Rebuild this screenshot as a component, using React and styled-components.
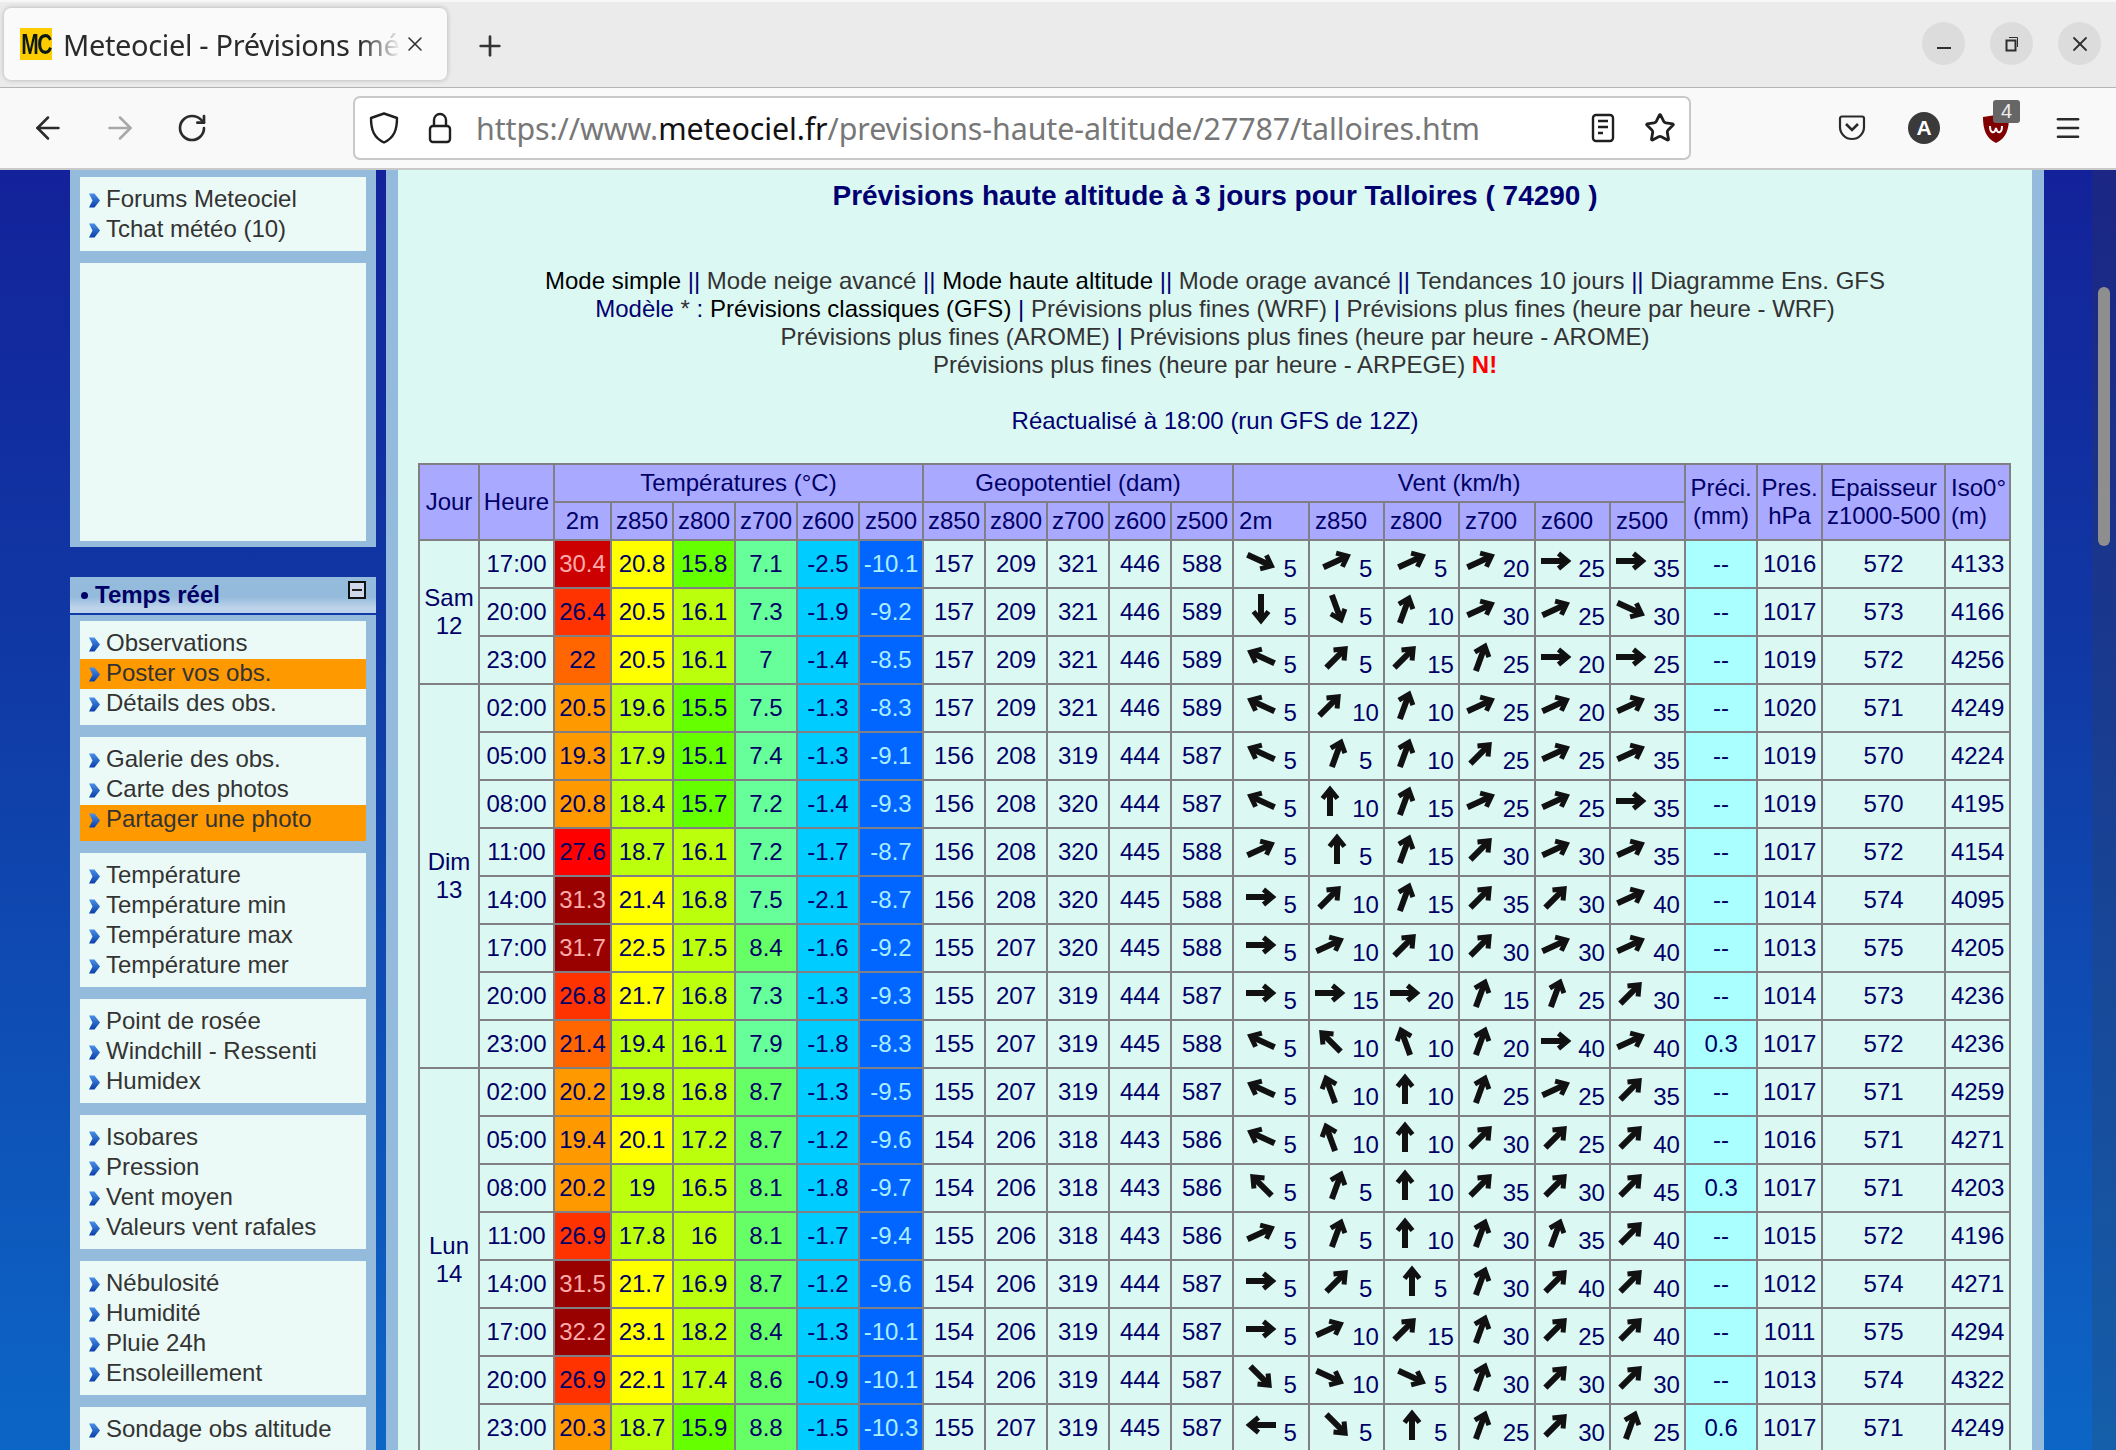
import styled, { createGlobalStyle } from "styled-components";
import { ArrowLeft, ArrowRight, RotateCw, Star, Plus, X, Menu } from "lucide-react";

const GlobalStyle = createGlobalStyle`
  html, body {
    margin: 0;
    padding: 0;
    height: 100%;
    overflow: hidden;
  }
  body {
    font-family: "Liberation Sans", Arial, sans-serif;
  }
`;

// browser chrome
const Browser = styled.div`
  display: flex;
  flex-direction: column;
  height: 100vh;
  overflow: hidden;
`;

const TabBar = styled.div`
  height: 88px;
  flex: none;
  display: flex;
  align-items: flex-start;
  box-sizing: border-box;
  padding: 6px 0 0 4px;
  background: #ebebeb;
  border-top: 2px solid #f7f7f7;
  border-bottom: 1px solid #b4b4b4;
`;

const Tab = styled.div`
  width: 443px;
  height: 72px;
  box-sizing: border-box;
  display: flex;
  align-items: center;
  padding-left: 16px;
  background: #fafafa;
  border-radius: 7px;
  box-shadow: 0 0 5px rgba(0, 0, 0, 0.25);
`;

const Favicon = styled.div`
  width: 32px;
  height: 32px;
  flex: none;
  background: #ffcc00;
  overflow: hidden;
  text-align: center;
`;

const FaviconText = styled.div`
  color: #0b1a10;
  font-size: 21px;
  font-weight: 700;
  letter-spacing: -1.5px;
  line-height: 32px;
  transform: scaleY(1.4);
`;

const TabTitle = styled.div`
  width: 338px;
  margin-left: 11px;
  flex: none;
  overflow: hidden;
  white-space: nowrap;
  font-family: "Noto Sans", sans-serif;
  font-size: 29px;
  letter-spacing: -0.35px;
  color: #2b2b2b;
  -webkit-mask-image: linear-gradient(90deg, #000 88%, transparent 100%);
  mask-image: linear-gradient(90deg, #000 88%, transparent 100%);
`;

const TabClose = styled.div`
  display: flex;
  margin-left: 2px;
  color: #333;
`;

const NewTab = styled.div`
  display: flex;
  margin: 22px 0 0 27px;
  color: #333;
`;

const WindowButtons = styled.div`
  margin: 14px 15px 0 auto;
  display: flex;
  gap: 25px;
`;

const WindowButton = styled.div`
  width: 43px;
  height: 43px;
  border-radius: 50%;
  background: #dcdcdc;
  color: #2e2e2e;
  display: flex;
  align-items: center;
  justify-content: center;
`;

const MinDash = styled.span`
  width: 14px;
  height: 2px;
  margin-top: 9px;
  background: #2e2e2e;
`;

const Toolbar = styled.div`
  height: 82px;
  flex: none;
  box-sizing: border-box;
  display: flex;
  align-items: center;
  padding: 0 11px 0 12px;
  background: #f9f9f9;
  border-bottom: 2px solid #c9c9c9;
`;

const ToolButton = styled.div`
  width: 72px;
  flex: none;
  display: flex;
  justify-content: center;
  align-items: center;
  position: relative;
  color: ${(props) => (props.$off ? "#a8a8a8" : "#2b2b2b")};
`;

const UrlBar = styled.div`
  width: 1338px;
  height: 64px;
  margin: 0 125px;
  flex: none;
  box-sizing: border-box;
  display: flex;
  align-items: center;
  background: #fff;
  border: 2px solid #c8c8c8;
  border-radius: 7px;
  color: #1f1f1f;
`;

const UrlIcon = styled.div`
  flex: none;
  display: flex;
  justify-content: center;
  width: ${(props) => props.$w}px;
  margin-left: ${(props) => props.$ml || 0}px;
`;

const UrlText = styled.div`
  width: 1003px;
  flex: none;
  margin-left: 9px;
  font-family: "Noto Sans", sans-serif;
  font-size: 30.4px;
  letter-spacing: -0.1px;
  white-space: nowrap;
  color: #777;

  b {
    font-weight: 400;
    color: #111;
  }
`;

const Avatar = styled.div`
  width: 32px;
  height: 32px;
  border-radius: 50%;
  background: #3a3a3a;
  color: #fff;
  font-weight: 700;
  font-size: 21px;
  line-height: 32px;
  text-align: center;
`;

const Badge = styled.div`
  position: absolute;
  left: 33px;
  top: -14px;
  width: 27px;
  height: 23px;
  border-radius: 3px;
  background: #666;
  color: #eee;
  font-size: 20px;
  line-height: 23px;
  text-align: center;
`;

// page
const Page = styled.div`
  position: relative;
  flex: 1;
  min-height: 0;
  display: flex;
  align-items: flex-start;
  padding-left: 70px;
  overflow: hidden;
  background: linear-gradient(180deg, #13229a 0, #103aa6 40%, #0c66c6 100%);
`;

const ScrollTrack = styled.div`
  position: absolute;
  top: 0;
  right: 0;
  bottom: 0;
  width: 24px;
  background: rgba(70, 60, 30, 0.17);
`;

const ScrollThumb = styled.div`
  position: absolute;
  top: 117px;
  left: 6px;
  width: 12px;
  height: 259px;
  border-radius: 6px;
  background: #8e8e8e;
`;

const Sidebar = styled.div`
  width: 306px;
  flex: none;
`;

const Frame = styled.div`
  display: flex;
  flex-direction: column;
  gap: 12px;
  padding: ${(props) => props.$pad};
  background: #95bbdc;
`;

const MenuBox = styled.ul`
  margin: 0;
  padding: 8px 0 0;
  list-style: none;
  background: #ebfaf6;
`;

const Filler = styled.div`
  height: 278px;
  background: #ebfaf6;
`;

const MenuItem = styled.li`
  display: flex;
  align-items: center;
  height: 30px;
  box-sizing: border-box;
  padding: 0 0 2px 9px;
  font-size: 24px;
  color: #333;
  background: ${(props) => (props.$on ? "#ff9900" : "transparent")};

  svg {
    flex: none;
    margin: 2px 6px 0 0;
  }

  &:last-child {
    height: 36px;
    padding-bottom: 8px;
  }
`;

const SectionHead = styled.div`
  margin-top: 30px;
  height: 38px;
  box-sizing: border-box;
  display: flex;
  align-items: center;
  padding: 0 10px 0 11px;
  background: linear-gradient(180deg, #95bbdc 0, #95bbdc 55%, #bcd3ea 85%);
  border-bottom: 2px solid #0f3ca8;
  color: #000066;
  font-size: 24px;
  font-weight: 700;
`;

const SectionDot = styled.span`
  width: 7px;
  height: 7px;
  margin-right: 7px;
  border-radius: 50%;
  background: #000066;
`;

const Collapse = styled.span`
  margin: -10px 0 0 auto;
  width: 18px;
  height: 18px;
  box-sizing: border-box;
  display: flex;
  align-items: center;
  justify-content: center;
  border: 2px solid #111;
  background: #cfd8ea;

  &::before {
    content: "";
    width: 10px;
    height: 2px;
    background: #222;
  }
`;

const Main = styled.main`
  width: 1658px;
  flex: none;
  margin-left: 10px;
  box-sizing: border-box;
  padding: 12px 20px 0;
  border: solid #95bbdc;
  border-width: 0 12px;
  background: #dcf8f3;
  text-align: center;
  font-size: 24px;
  line-height: 28px;
  color: #000070;
  min-height: 1280px;
`;

const Title = styled.h1`
  margin: 0 0 57px;
  font-size: 28px;
  line-height: 28px;
  font-weight: 700;
`;

const Links = styled.div`
  margin-bottom: 28px;
`;

const Link = styled.span`
  color: ${(props) => (props.$on ? "#000" : "#333")};
`;

const New = styled.b`
  color: #f00;
`;

const Updated = styled.div`
  margin-bottom: 28px;
`;

// table
const Table = styled.table`
  width: 1591px;
  table-layout: fixed;
  border-collapse: collapse;
  font-size: 24px;
  line-height: 28px;
  color: #000066;
  border: 2px solid #808084;
`;

const Cell = styled.td`
  height: 48px;
  box-sizing: border-box;
  padding: 0;
  text-align: center;
  white-space: nowrap;
  overflow: hidden;
  border: 2px solid #808084;
  background: ${(props) => props.$bg || "#dcf8f3"};
  color: ${(props) => props.$fg || "#000066"};
`;

const Head = styled.th`
  height: 38px;
  box-sizing: border-box;
  padding: 0 0 0 ${(props) => (props.$left ? "5px" : "0")};
  font-weight: 400;
  white-space: nowrap;
  text-align: ${(props) => (props.$left ? "left" : "center")};
  border: 2px solid #808084;
  background: #a9a9ff;
`;

const ArrowSvg = styled.svg`
  display: inline-block;
  vertical-align: baseline;
  margin-right: 6px;
  color: #111;
  filter: blur(0.4px);
`;

const COLS = [60, 75, 57, 62, 62, 62, 62, 64, 62, 62, 62, 62, 62, 76, 75, 75, 76, 75, 75, 72, 65, 123, 65];

// temp 2m, z850, z800, z700, z600, z500 | geo x5 | wind angle/speed x6 | prec, pres, thick, iso
const ROWS = [
  ["17:00", "30.4 20.8 15.8 7.1 -2.5 -10.1", "157 209 321 446 588", "115/5 65/5 65/5 65/20 90/25 90/35", "-- 1016 572 4133"],
  ["20:00", "26.4 20.5 16.1 7.3 -1.9 -9.2", "157 209 321 446 589", "180/5 160/5 20/10 65/30 65/25 115/30", "-- 1017 573 4166"],
  ["23:00", "22 20.5 16.1 7 -1.4 -8.5", "157 209 321 446 589", "-65/5 45/5 45/15 20/25 90/20 90/25", "-- 1019 572 4256"],
  ["02:00", "20.5 19.6 15.5 7.5 -1.3 -8.3", "157 209 321 446 589", "-65/5 45/10 20/10 65/25 65/20 65/35", "-- 1020 571 4249"],
  ["05:00", "19.3 17.9 15.1 7.4 -1.3 -9.1", "156 208 319 444 587", "-65/5 20/5 20/10 45/25 65/25 65/35", "-- 1019 570 4224"],
  ["08:00", "20.8 18.4 15.7 7.2 -1.4 -9.3", "156 208 320 444 587", "-65/5 0/10 20/15 65/25 65/25 90/35", "-- 1019 570 4195"],
  ["11:00", "27.6 18.7 16.1 7.2 -1.7 -8.7", "156 208 320 445 588", "65/5 0/5 20/15 45/30 65/30 65/35", "-- 1017 572 4154"],
  ["14:00", "31.3 21.4 16.8 7.5 -2.1 -8.7", "156 208 320 445 588", "90/5 45/10 20/15 45/35 45/30 65/40", "-- 1014 574 4095"],
  ["17:00", "31.7 22.5 17.5 8.4 -1.6 -9.2", "155 207 320 445 588", "90/5 65/10 45/10 45/30 65/30 65/40", "-- 1013 575 4205"],
  ["20:00", "26.8 21.7 16.8 7.3 -1.3 -9.3", "155 207 319 444 587", "90/5 90/15 90/20 20/15 20/25 45/30", "-- 1014 573 4236"],
  ["23:00", "21.4 19.4 16.1 7.9 -1.8 -8.3", "155 207 319 445 588", "-65/5 -45/10 -20/10 20/20 90/40 65/40", "0.3 1017 572 4236"],
  ["02:00", "20.2 19.8 16.8 8.7 -1.3 -9.5", "155 207 319 444 587", "-65/5 -20/10 0/10 20/25 65/25 45/35", "-- 1017 571 4259"],
  ["05:00", "19.4 20.1 17.2 8.7 -1.2 -9.6", "154 206 318 443 586", "-65/5 -20/10 0/10 45/30 45/25 45/40", "-- 1016 571 4271"],
  ["08:00", "20.2 19 16.5 8.1 -1.8 -9.7", "154 206 318 443 586", "-45/5 20/5 0/10 45/35 45/30 45/45", "0.3 1017 571 4203"],
  ["11:00", "26.9 17.8 16 8.1 -1.7 -9.4", "155 206 318 443 586", "65/5 20/5 0/10 20/30 20/35 45/40", "-- 1015 572 4196"],
  ["14:00", "31.5 21.7 16.9 8.7 -1.2 -9.6", "154 206 319 444 587", "90/5 45/5 0/5 20/30 45/40 45/40", "-- 1012 574 4271"],
  ["17:00", "32.2 23.1 18.2 8.4 -1.3 -10.1", "154 206 319 444 587", "90/5 65/10 45/15 20/30 45/25 45/40", "-- 1011 575 4294"],
  ["20:00", "26.9 22.1 17.4 8.6 -0.9 -10.1", "154 206 319 444 587", "135/5 115/10 115/5 20/30 45/30 45/30", "-- 1013 574 4322"],
  ["23:00", "20.3 18.7 15.9 8.8 -1.5 -10.3", "155 207 319 445 587", "-90/5 135/5 0/5 20/25 45/30 20/25", "0.6 1017 571 4249"],
];

const DAYS = { 0: ["Sam", "12", 3], 3: ["Dim", "13", 8], 11: ["Lun", "14", 8] };

function tempColors(value, isGround) {
  const t = parseFloat(value);
  if (isGround) {
    if (t >= 31) return ["#990000", "#ffaaaa"];
    if (t >= 30) return ["#cc0000", "#ffaaaa"];
    if (t >= 27) return ["#ff0000"];
    if (t >= 26) return ["#ff3300"];
    if (t >= 21) return ["#ff6600"];
    return ["#ff9900"];
  }
  if (t >= 20) return ["#ffff00"];
  if (t >= 16) return ["#bbff0c"];
  if (t >= 10) return ["#66ff00"];
  if (t >= 8) return ["#66ff66"];
  if (t >= 0) return ["#66ff99"];
  if (t > -8) return ["#00ccff"];
  return ["#0066ff", "#aaeeff"];
}

function WindArrow({ angle }) {
  return (
    <ArrowSvg width="32" height="32" viewBox="0 0 32 32">
      <g transform={`rotate(${angle} 16 16)`} fill="none" stroke="currentColor">
        <path d="M16 31V7" strokeWidth="6" />
        <path d="M8.5 13.5L16 4.5l7.5 9" strokeWidth="5" />
      </g>
    </ArrowSvg>
  );
}

function Chevron() {
  return (
    <svg width="11" height="15" viewBox="0 0 11 15">
      <defs>
        <linearGradient id="chev" x1="0" y1="0" x2="0" y2="1">
          <stop offset="0" stopColor="#4a90e8" />
          <stop offset="1" stopColor="#0a3fa8" />
        </linearGradient>
      </defs>
      <path d="M0 0.5h5.5L11 7.5 5.5 14.5H0L3.5 7.5z" fill="url(#chev)" />
    </svg>
  );
}

function SideMenu({ items, active = [] }) {
  return (
    <MenuBox>
      {items.map((item) => (
        <MenuItem key={item} $on={active.includes(item)}>
          <Chevron />
          {item}
        </MenuItem>
      ))}
    </MenuBox>
  );
}

function WeatherRow({ row, index }) {
  const [hour, temps, geo, winds, tail] = row;
  const day = DAYS[index];
  const [prec, ...rest] = tail.split(" ");
  return (
    <tr>
      {day && (
        <Cell rowSpan={day[2]}>
          {day[0]}
          <br />
          {day[1]}
        </Cell>
      )}
      <Cell>{hour}</Cell>
      {temps.split(" ").map((t, i) => {
        const [bg, fg] = tempColors(t, i === 0);
        return (
          <Cell key={i} $bg={bg} $fg={fg}>
            {t}
          </Cell>
        );
      })}
      {geo.split(" ").map((g, i) => (
        <Cell key={i}>{g}</Cell>
      ))}
      {winds.split(" ").map((w, i) => {
        const [angle, speed] = w.split("/");
        return (
          <Cell key={i}>
            <WindArrow angle={angle} />
            {speed}
          </Cell>
        );
      })}
      <Cell $bg="#aaffff">{prec}</Cell>
      {rest.map((v, i) => (
        <Cell key={i}>{v}</Cell>
      ))}
    </tr>
  );
}

function WeatherTable() {
  return (
    <Table>
      <colgroup>
        {COLS.map((w, i) => (
          <col key={i} width={w} />
        ))}
      </colgroup>
      <thead>
        <tr>
          <Head rowSpan={2}>Jour</Head>
          <Head rowSpan={2}>Heure</Head>
          <Head colSpan={6}>Températures (°C)</Head>
          <Head colSpan={5}>Geopotentiel (dam)</Head>
          <Head colSpan={6}>Vent (km/h)</Head>
          <Head rowSpan={2}>
            Préci.
            <br />
            (mm)
          </Head>
          <Head rowSpan={2}>
            Pres.
            <br />
            hPa
          </Head>
          <Head rowSpan={2}>
            Epaisseur
            <br />
            z1000-500
          </Head>
          <Head rowSpan={2} $left>
            Iso0°
            <br />
            (m)
          </Head>
        </tr>
        <tr>
          {["2m", "z850", "z800", "z700", "z600", "z500", "z850", "z800", "z700", "z600", "z500"].map((h, i) => (
            <Head key={i}>{h}</Head>
          ))}
          {["2m", "z850", "z800", "z700", "z600", "z500"].map((h) => (
            <Head key={h} $left>
              {h}
            </Head>
          ))}
        </tr>
      </thead>
      <tbody>
        {ROWS.map((row, i) => (
          <WeatherRow key={i} row={row} index={i} />
        ))}
      </tbody>
    </Table>
  );
}

function ChromeTop() {
  return (
    <>
      <TabBar>
        <Tab>
          <Favicon>
            <FaviconText>MC</FaviconText>
          </Favicon>
          <TabTitle>Meteociel - Prévisions météo</TabTitle>
          <TabClose>
            <X size={24} strokeWidth={1.6} />
          </TabClose>
        </Tab>
        <NewTab>
          <Plus size={32} strokeWidth={2} />
        </NewTab>
        <WindowButtons>
          <WindowButton>
            <MinDash />
          </WindowButton>
          <WindowButton>
            <svg width="18" height="18" viewBox="0 0 18 18" fill="none" stroke="currentColor">
              <rect x="3.5" y="5.5" width="9" height="10" strokeWidth="2" />
              <path d="M6 2.5h8.5V12" strokeWidth="1" />
            </svg>
          </WindowButton>
          <WindowButton>
            <X size={24} strokeWidth={1.8} />
          </WindowButton>
        </WindowButtons>
      </TabBar>
      <Toolbar>
        <ToolButton>
          <ArrowLeft size={36} strokeWidth={1.7} />
        </ToolButton>
        <ToolButton $off>
          <ArrowRight size={36} strokeWidth={1.7} />
        </ToolButton>
        <ToolButton>
          <RotateCw size={32} strokeWidth={2} />
        </ToolButton>
        <UrlBar>
          <UrlIcon $w={58}>
            <svg width="30" height="32" viewBox="0 0 30 32" fill="none" stroke="currentColor" strokeWidth="2.4">
              <path d="M15 1.5L28 6c0 12-3 20-13 24.5C5 26 2 18 2 6z" strokeLinejoin="round" />
            </svg>
          </UrlIcon>
          <UrlIcon $w={54}>
            <svg width="24" height="32" viewBox="0 0 24 32" fill="none" stroke="currentColor" strokeWidth="2.4">
              <rect x="2" y="14" width="20" height="16" rx="3" />
              <path d="M6 14V8a6 6 0 0 1 12 0v6" />
            </svg>
          </UrlIcon>
          <UrlText>
            https://www.<b>meteociel.fr</b>/previsions-haute-altitude/27787/talloires.htm
          </UrlText>
          <UrlIcon $w={26} $ml={111}>
            <svg width="24" height="30" viewBox="0 0 24 30" fill="none" stroke="currentColor" strokeWidth="2.4">
              <rect x="2" y="2" width="20" height="26" rx="3" />
              <path d="M7 8h10M7 14h10M7 20h5" strokeWidth="2.6" />
            </svg>
          </UrlIcon>
          <UrlIcon $w={32} $ml={28}>
            <Star size={34} strokeWidth={2.1} />
          </UrlIcon>
        </UrlBar>
        <ToolButton>
          <svg width="28" height="26" viewBox="0 0 28 26" fill="none" stroke="currentColor" strokeWidth="2.2">
            <path d="M2 3.5a2 2 0 0 1 2-2h20a2 2 0 0 1 2 2V12a12 12 0 0 1-24 0z" />
            <path d="M8 9l6 6 6-6" strokeWidth="2.6" />
          </svg>
        </ToolButton>
        <ToolButton>
          <Avatar>A</Avatar>
        </ToolButton>
        <ToolButton>
          <svg width="28" height="29" viewBox="0 0 28 29">
            <path d="M1 3l13-2 13 2c0 13-3 21-13 26C4 24 1 16 1 3z" fill="#800000" />
            <path d="M8 12c0 8 5 8 6 2 1 6 6 6 6-2" fill="none" stroke="#fff" strokeWidth="2" />
          </svg>
          <Badge>4</Badge>
        </ToolButton>
        <ToolButton>
          <Menu size={30} strokeWidth={2.1} />
        </ToolButton>
      </Toolbar>
    </>
  );
}

function App() {
  return (
    <Browser>
      <GlobalStyle />
      <ChromeTop />
      <Page>
        <Sidebar>
          <Frame $pad="7px 10px 6px">
            <SideMenu items={["Forums Meteociel", "Tchat météo (10)"]} />
            <Filler />
          </Frame>
          <SectionHead>
            <SectionDot />
            Temps réel
            <Collapse />
          </SectionHead>
          <Frame $pad="6px 10px 12px">
            <SideMenu items={["Observations", "Poster vos obs.", "Détails des obs."]} active={["Poster vos obs."]} />
            <SideMenu items={["Galerie des obs.", "Carte des photos", "Partager une photo"]} active={["Partager une photo"]} />
            <SideMenu items={["Température", "Température min", "Température max", "Température mer"]} />
            <SideMenu items={["Point de rosée", "Windchill - Ressenti", "Humidex"]} />
            <SideMenu items={["Isobares", "Pression", "Vent moyen", "Valeurs vent rafales"]} />
            <SideMenu items={["Nébulosité", "Humidité", "Pluie 24h", "Ensoleillement"]} />
            <SideMenu items={["Sondage obs altitude"]} />
          </Frame>
        </Sidebar>
        <Main>
          <Title>Prévisions haute altitude à 3 jours pour Talloires ( 74290 )</Title>
          <Links>
            <Link $on>Mode simple</Link> || <Link>Mode neige avancé</Link> || <Link $on>Mode haute altitude</Link> ||{" "}
            <Link>Mode orage avancé</Link> || <Link>Tendances 10 jours</Link> || <Link>Diagramme Ens. GFS</Link>
            <br />
            Modèle <Link>*</Link> : <Link $on>Prévisions classiques (GFS)</Link> | <Link>Prévisions plus fines (WRF)</Link> |{" "}
            <Link>Prévisions plus fines (heure par heure - WRF)</Link>
            <br />
            <Link>Prévisions plus fines (AROME)</Link> | <Link>Prévisions plus fines (heure par heure - AROME)</Link>
            <br />
            <Link>Prévisions plus fines (heure par heure - ARPEGE)</Link> <New>N!</New>
          </Links>
          <Updated>Réactualisé à 18:00 (run GFS de 12Z)</Updated>
          <WeatherTable />
        </Main>
        <ScrollTrack>
          <ScrollThumb />
        </ScrollTrack>
      </Page>
    </Browser>
  );
}

export default App;
